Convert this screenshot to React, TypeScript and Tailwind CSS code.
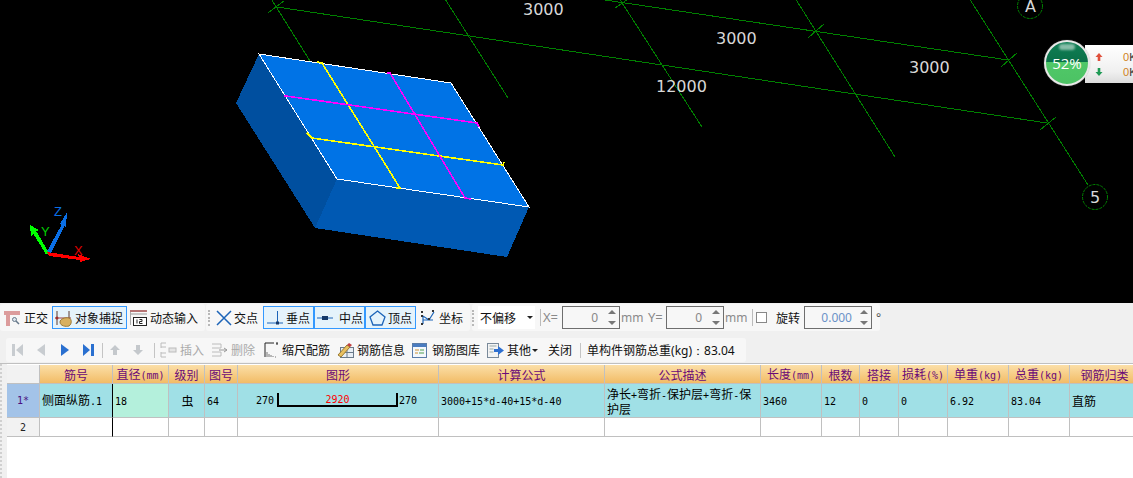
import type { ReactNode } from "react";
import clsx from "clsx";

const cjk = "font-['Noto_Sans_CJK_SC','Noto_Sans',sans-serif]";

// split latin runs off so they get the narrow half-width look of the original grid font
function T({ s }: { s: string }) {
  return (
    <>
      {s.split(/([\x00-\x7f]+)/).map((part, i) =>
        /^[\x00-\x7f]+$/.test(part) ? (
          <span key={i} className="font-['DejaVu_Sans_Mono',monospace] text-[10px]">
            {part}
          </span>
        ) : (
          <span key={i}>{part}</span>
        )
      )}
    </>
  );
}

function Viewport() {
  const greens = [
    [270, -3, 315, 69],
    [445, -1, 508, 98],
    [617, -5, 702, 127],
    [795, -2, 895, 157],
    [969, -2, 1088, 185],
    [277, 7, 1047, 123],
    [605, 0, 1008, 60],
    [268, 13, 284, 1],
    [615, 8, 631, -3],
    [808, 38, 824, 24],
    [1001, 67, 1017, 53],
    [1040, 130, 1056, 117],
  ];
  return (
    <div className="relative h-[303px] shrink-0 bg-black">
      <svg width="1133" height="303" className="block">
        <g stroke="#008000" shapeRendering="crispEdges">
          {greens.map(([a, b, c, d], i) => (
            <line key={i} x1={a} y1={b} x2={c} y2={d} />
          ))}
        </g>
        <g fill="none" stroke="#008000" strokeDasharray="3 1">
          <circle cx="1030" cy="6" r="12.5" />
          <circle cx="1095" cy="197" r="12.5" />
        </g>
        <g fill="#d8d8d8" fontFamily="DejaVu Sans" fontSize="16">
          <text x="523" y="15">3000</text>
          <text x="716" y="44">3000</text>
          <text x="909" y="73">3000</text>
          <text x="656" y="92">12000</text>
          <text x="1025" y="12">A</text>
          <text x="1090" y="203">5</text>
        </g>

        {/* the slab */}
        <g shapeRendering="crispEdges">
          <polygon points="259,54 236,103 315,228 337,179" fill="#004f9f" />
          <polygon points="337,179 315,228 507,257 529,207" fill="#0059b3" />
          <polygon points="259,54 451,83 529,207 337,179" fill="#0073e6" stroke="#fff" />
          <g fill="none" strokeWidth="1.6">
            <polyline points="317,62 322,63 400,188 396,188" stroke="#ffff00" />
            <polyline points="307,133 312,138 503,165 504,162" stroke="#ffff00" />
            <polyline points="387,73 390,73 465,198 471,199" stroke="#ff00ff" />
            <polyline points="284,96 286,96 477,123 479,127" stroke="#ff00ff" />
          </g>
        </g>

        {/* axis triad */}
        <g shapeRendering="crispEdges">
          <polygon points="67,212 66,227 64.500,226 50,254.500 45.500,254 61.500,225 60,224" fill="#0a6fe6" />
          <polygon points="30,225 39,230 36.500,231.500 49.500,254 46,254.500 33.500,234 31,236.500" fill="#00ff00" />
          <polygon points="47,252 79,257 78,254 91,259 80,262 80,260 49,256" fill="#ff0000" />
        </g>
        <g fontFamily="Liberation Sans" fontSize="13">
          <text x="54" y="216" fill="#0a6fe6">Z</text>
          <text x="41" y="236" fill="#00d000">Y</text>
          <text x="74" y="255" fill="#e00000">X</text>
        </g>
      </svg>

      {/* memory gauge floating over the drawing */}
      <div className="absolute left-[1085px] top-[45px] flex h-[38px] w-[48px] flex-col justify-center gap-[3px] overflow-hidden bg-[linear-gradient(#ffffff,#f0f0f0_70%,#dcdcdc)] pl-[10px] font-['Liberation_Sans',sans-serif] text-[11px] leading-[12px]">
        <div className="flex items-center">
          <svg width="8" height="10" viewBox="0 0 8 10" className="shrink-0"><path d="M4 1 7.5 5H5.3v4H2.7V5H.5z" fill="#e0503c" /></svg>
          <span className="ml-[20px] shrink-0 text-[#d08020]">0</span>
          <span className="shrink-0 text-[#333]">K</span>
        </div>
        <div className="flex items-center">
          <svg width="8" height="10" viewBox="0 0 8 10" className="shrink-0"><path d="M4 9 .5 5h2.2V1h2.6v4h2.2z" fill="#1f9a55" /></svg>
          <span className="ml-[20px] shrink-0 text-[#d08020]">0</span>
          <span className="shrink-0 text-[#333]">K</span>
        </div>
      </div>
      <div className="absolute left-[1044px] top-[40px] h-[46px] w-[46px] overflow-hidden rounded-full border-2 border-[#e8e8e8] bg-[linear-gradient(#0f7f55,#0a7048_48%,#50c868_48%,#4cc264)] shadow-[0_0_1px_#999]">
        <div className="absolute left-[13px] top-[2px] h-[6px] w-[16px] rounded-full bg-white/50 blur-[1px]" />
        <div className="absolute inset-0 flex items-center justify-center font-['Open_Sans',sans-serif] text-[15px] leading-none text-white">52%</div>
      </div>
    </div>
  );
}

/* ---------- toolbar icons ---------- */
const Ortho = () => (
  <svg width="16" height="16" viewBox="0 0 16 16">
    <path d="M0 1h16v4H6v11H2V5H0z" fill="#dc9c9c" />
    <circle cx="10.5" cy="9.500" r="2" fill="#dfe6ee" stroke="#66788a" />
    <path d="m12 11 3 3" stroke="#66788a" strokeWidth="1.5" />
  </svg>
);
const Snap = () => (
  <svg width="17" height="18" viewBox="0 0 17 18">
    <path d="M2 2v14M14 2v14" stroke="#5a3a30" />
    <path d="M0 9h16" stroke="#a04040" />
    <path d="M5 13c0-3 5-5 9-4 3 1 3 6 0 8-3 1-9 0-9-4z" fill="#d8b060" stroke="#9a7a38" />
    <circle cx="2" cy="9" r="1.500" fill="#a03030" />
  </svg>
);
const DynInput = () => (
  <svg width="17" height="16" viewBox="0 0 17 16">
    <path d="M0 1h17" stroke="#a04848" strokeWidth="1.5" />
    <path d="M0 4h17" stroke="#999" />
    <path d="M.5 2v13" stroke="#aaa" />
    <rect x="3.500" y="7.500" width="13" height="8" fill="#fff" stroke="#222" />
    <path d="M7 9.500v4M9.500 9.500H12v2H9.500v2H12.500" stroke="#222" fill="none" />
  </svg>
);
const Cross = () => (
  <svg width="16" height="16" viewBox="0 0 16 16">
    <path d="m1 1 14 14M15 1 1 15" stroke="#1c64b8" strokeWidth="1.500" />
  </svg>
);
const Perp = () => (
  <svg width="16" height="16" viewBox="0 0 16 16">
    <path d="M10.500 1v12M0 13h16" stroke="#1c64b8" />
    <rect x="9" y="11.500" width="3" height="3" fill="#163a6a" />
  </svg>
);
const Mid = () => (
  <svg width="16" height="8" viewBox="0 0 16 8">
    <path d="M0 4h16" stroke="#1c64b8" />
    <rect x="5" y="2" width="6" height="4" fill="#163a6a" />
  </svg>
);
const Vertex = () => (
  <svg width="17" height="16" viewBox="0 0 17 16">
    <path d="m8.500 1 7.500 6-3 8H4L1 7z" fill="none" stroke="#1c64b8" strokeWidth="1.300" />
  </svg>
);
const Coord = () => (
  <svg width="17" height="17" viewBox="0 0 17 17" fill="none" stroke="#1c64b8">
    <path d="M4 15V7l6 4 5-8M4 11h10" strokeWidth="1.200" />
    <g fill="#333" stroke="none">
      <rect x="2" y="2" width="2" height="2" />
      <rect x="2" y="6" width="2" height="2" />
      <rect x="2" y="14" width="2" height="2" />
      <rect x="13" y="1" width="2" height="2" />
      <rect x="9" y="9" width="2" height="2" />
    </g>
  </svg>
);
const Grip = () => (
  <div className="flex h-[16px] w-[2px] shrink-0 flex-col justify-between">
    {[0, 1, 2, 3, 4].map((i) => (
      <div key={i} className="h-[2px] w-[2px] bg-[#b8b8b8]" />
    ))}
  </div>
);
const Spin = () => (
  <div className="flex flex-col gap-[7px]">
    <div className="h-0 w-0 border-x-[4px] border-b-[4px] border-x-transparent border-b-[#777]" />
    <div className="h-0 w-0 border-x-[4px] border-t-[4px] border-x-transparent border-t-[#777]" />
  </div>
);

function Tool({ icon, label, className, on }: { icon?: ReactNode; label: string; className?: string; on?: boolean }) {
  return (
    <div
      className={clsx(
        "flex h-[23px] shrink-0 items-center",
        on && "border border-[#3399ff] bg-[#e5f3fb]",
        className
      )}
    >
      {icon}
      <span className="whitespace-nowrap">{label}</span>
    </div>
  );
}

function Num({ value, className, text }: { value: string; className: string; text: string }) {
  return (
    <div className={clsx("flex h-[23px] shrink-0 items-center justify-end border border-[#6e6e6e] pr-[3px]", className)}>
      <span className={clsx("font-['Noto_Sans',sans-serif] text-[12px]", text)}>{value}</span>
      <Spin />
    </div>
  );
}

function SnapBar() {
  return (
    <div className="flex h-[32px] shrink-0 items-start bg-[#f0f0f0] pt-px text-[12px] text-[#111]">
      <div className="flex h-[27px] w-[205px] shrink-0 items-center rounded-[3px] bg-[#f7f7f7] pl-[4px]">
        <Tool icon={<Ortho />} label="正交" className="w-[44px] gap-[4px]" />
        <Tool on icon={<Snap />} label="对象捕捉" className="ml-[4px] w-[75px] gap-[3px] pl-[2px]" />
        <Tool icon={<DynInput />} label="动态输入" className="ml-[3px] w-[68px] gap-[3px]" />
      </div>
      <div className="ml-[1px] flex h-[27px] w-[264px] shrink-0 items-center rounded-[3px] bg-[#f7f7f7] pl-[2px]">
        <Grip />
        <Tool icon={<Cross />} label="交点" className="ml-[6px] w-[43px] gap-[2px]" />
        <Tool on icon={<Perp />} label="垂点" className="ml-[4px] w-[51px] gap-[3px] pl-[3px]" />
        <Tool on icon={<Mid />} label="中点" className="w-[51px] gap-[6px] pl-[2px]" />
        <Tool on icon={<Vertex />} label="顶点" className="w-[51px] gap-[2px] pl-[3px]" />
        <Tool icon={<Coord />} label="坐标" className="ml-[3px] w-[44px] gap-[3px]" />
      </div>
      <div className="ml-[2px] flex h-[27px] w-[408px] shrink-0 items-center rounded-[3px] bg-[#f7f7f7] text-[#8a8a8a]">
        <Grip />
        <div className="ml-[4px] flex h-[23px] w-[57px] shrink-0 items-center bg-white pl-[2px] text-[#111]">
          <span className="whitespace-nowrap">不偏移</span>
          <div className="ml-[11px] h-0 w-0 border-x-[3px] border-t-[3px] border-x-transparent border-t-[#222]" />
        </div>
        <div className="ml-[5px] h-[17px] w-px shrink-0 bg-[#bbb]" />
        <span className="ml-[2px] w-[19px] shrink-0 font-['Noto_Sans',sans-serif] text-[13px]">X=</span>
        <Num value="0" text="mr-[10px] text-[#888]" className="w-[58px]" />
        <span className="ml-[1px] w-[27px] shrink-0 font-['Noto_Sans',sans-serif]">mm</span>
        <span className="w-[18px] shrink-0 font-['Noto_Sans',sans-serif] text-[13px]">Y=</span>
        <Num value="0" text="mr-[10px] text-[#888]" className="w-[58px]" />
        <span className="ml-[1px] w-[27px] shrink-0 font-['Noto_Sans',sans-serif]">mm</span>
        <div className="h-[17px] w-px shrink-0 bg-[#bbb]" />
        <div className="ml-[3px] h-[11px] w-[11px] shrink-0 border border-[#888] bg-white" />
        <span className="ml-[9px] w-[28px] shrink-0 text-[#111]">旋转</span>
        <Num value="0.000" text="mr-[8px] text-[#6a92c8]" className="w-[68px]" />
        <span className="ml-[4px] font-['Noto_Sans',sans-serif] text-[#555]">°</span>
      </div>
    </div>
  );
}

/* ---------- grid toolbar ---------- */
const NavFirst = ({ c }: { c: string }) => (
  <svg width="11" height="12" viewBox="0 0 11 12"><path d="M0 0h3v12H0zM11 0v12L4 6z" fill={c} /></svg>
);
const NavPrev = ({ c }: { c: string }) => (
  <svg width="9" height="12" viewBox="0 0 9 12"><path d="M8 0v12L0 6z" fill={c} /></svg>
);
const NavNext = ({ c }: { c: string }) => (
  <svg width="9" height="12" viewBox="0 0 9 12"><path d="M1 0v12l8-6z" fill={c} /></svg>
);
const NavLast = ({ c }: { c: string }) => (
  <svg width="11" height="12" viewBox="0 0 11 12"><path d="M8 0h3v12H8zM0 0v12l7-6z" fill={c} /></svg>
);
const Up = () => (
  <svg width="10" height="10" viewBox="0 0 10 10"><path d="M5 0 10 5H7v5H3V5H0z" fill="#c4c8cc" /></svg>
);
const Down = () => (
  <svg width="10" height="10" viewBox="0 0 10 10"><path d="M5 10 0 5h3V0h4v5h3z" fill="#c4c8cc" /></svg>
);
const Sep = ({ className }: { className: string }) => <div className={clsx("h-[15px] w-px shrink-0 bg-[#c4c4c4]", className)} />;
const InsertIcon = () => (
  <svg width="17" height="16" viewBox="0 0 17 16" fill="none" stroke="#bcbcbc">
    <path d="M6 1H1v4h5M6 11H1v4h5M1 5v1M1 10v1" />
    <path d="M9 8h7" stroke="#aaa" />
    <rect x="9" y="6" width="7" height="4" fill="#e4e4e4" />
  </svg>
);
const DeleteIcon = () => (
  <svg width="17" height="16" viewBox="0 0 17 16" fill="none" stroke="#bcbcbc">
    <path d="M1 2h9v4H1M1 10h9v4H1" />
    <path d="M8 8h8" stroke="#999" />
    <path d="m13 6 3 2-3 2" stroke="#999" />
  </svg>
);
const ScaleIcon = () => (
  <svg width="14" height="16" viewBox="0 0 14 16" fill="none" stroke="#222">
    <path d="M1 1v14" />
    <path d="M1 1h9M12 1h2M13 1v2" />
    <path d="M3 15v-5M5 15v-3M7 15v-2M9 15v-1M11 15h1" stroke="#777" />
  </svg>
);
const InfoIcon = () => (
  <svg width="17" height="16" viewBox="0 0 17 16">
    <rect x="3.500" y="5.500" width="13" height="10" fill="#e8eef4" stroke="#6a7a8a" />
    <path d="M3.500 10.500h13M10 5.500v10" stroke="#6a7a8a" />
    <path d="m1 13 9-10 3 2-9 10z" fill="#e8c060" stroke="#9a7a30" />
    <path d="m10 3 2-2 3 2-2 2z" fill="#c04040" />
  </svg>
);
const LibIcon = () => (
  <svg width="15" height="15" viewBox="0 0 15 15">
    <rect x=".5" y=".5" width="14" height="14" fill="#f4f8fc" stroke="#5a7ca8" />
    <rect x="1" y="1" width="13" height="3" fill="#4a7cc0" />
    <path d="M3 7h4M3 10h3" stroke="#d09030" />
    <path d="M8 7h4M7 10h5" stroke="#50a050" />
  </svg>
);
const OtherIcon = () => (
  <svg width="17" height="15" viewBox="0 0 17 15">
    <rect x=".5" y=".5" width="11" height="14" fill="#f4f4f4" stroke="#7a8a9a" />
    <path d="M2.500 3h7M2.500 6h4M2.500 9h4" stroke="#9aa" />
    <path d="M7 6h4V3l6 4.500-6 4.500V9H7z" fill="#2f70d0" />
  </svg>
);

function GridBar() {
  return (
    <div className="flex h-[28px] shrink-0 items-end bg-[#f0f0f0] pb-px pl-[6px] text-[12px]">
      <div className="flex h-[24px] w-[740px] shrink-0 items-center rounded-[3px] bg-[#f7f7f7] text-[#111]">
        <div className="ml-[6px] flex w-[25px] shrink-0"><NavFirst c="#c8ccd0" /></div>
        <div className="flex w-[23px] shrink-0"><NavPrev c="#c8ccd0" /></div>
        <div className="flex w-[23px] shrink-0"><NavNext c="#2a70d0" /></div>
        <NavLast c="#2a70d0" />
        <Sep className="ml-[8px]" />
        <div className="ml-[7px] flex w-[23px] shrink-0"><Up /></div>
        <Down />
        <Sep className="ml-[11px]" />
        <Tool icon={<InsertIcon />} label="插入" className="ml-[5px] w-[51px] gap-[3px] text-[#aaa]" />
        <Tool icon={<DeleteIcon />} label="删除" className="w-[53px] gap-[3px] text-[#aaa]" />
        <Tool icon={<ScaleIcon />} label="缩尺配筋" className="w-[73px] gap-[4px]" />
        <Tool icon={<InfoIcon />} label="钢筋信息" className="w-[75px] gap-[3px]" />
        <Tool icon={<LibIcon />} label="钢筋图库" className="w-[75px] gap-[5px]" />
        <Tool icon={<OtherIcon />} label="其他" className="w-[44px] gap-[3px]" />
        <div className="ml-[1px] h-0 w-0 shrink-0 border-x-[3px] border-t-[3px] border-x-transparent border-t-[#222]" />
        <span className="ml-[10px] shrink-0">关闭</span>
        <Sep className="ml-[8px]" />
        <span className="ml-[6px] whitespace-nowrap">
          单构件钢筋总重<span className="font-['Noto_Sans',sans-serif]">(kg)：83.04</span>
        </span>
      </div>
    </div>
  );
}

/* ---------- rebar table ---------- */
const headers = ["筋号", "直径(mm)", "级别", "图号", "图形", "计算公式", "公式描述", "长度(mm)", "根数", "搭接", "损耗(%)", "单重(kg)", "总重(kg)", "钢筋归类"];
const cellLine = "border-r border-b border-[#c0c0c0]";

function Cell({ s, className }: { s?: string; className?: string }) {
  return (
    <div className={clsx("flex items-center overflow-hidden pl-[2px] text-black", cellLine, className)}>
      {s ? <span><T s={s} /></span> : null}
    </div>
  );
}

function RebarTable() {
  return (
    <div className={clsx("flex min-h-0 flex-1 border-t border-[#c0c0c0] bg-white text-[12px]", cjk)}>
      <div className="w-[7px] shrink-0 border-l-2 border-dotted border-[#d0d0d0] bg-[#f0f0f0]" />
      <div className="grid h-fit shrink-0 grid-cols-[33px_73px_56px_36px_33px_201px_166px_156px_61px_38px_39px_49px_61px_61px_70px] grid-rows-[19px_34px_19px] pt-px leading-[13px]">
        <div className={clsx("bg-[#f2f2f2]", cellLine)} />
        {headers.map((h) => (
          <div
            key={h}
            className={clsx(
              "flex items-center justify-center whitespace-nowrap bg-[linear-gradient(#fbdfa8,#f2bc66)] text-[#6a0a78]",
              cellLine
            )}
          >
            <span><T s={h} /></span>
          </div>
        ))}

        <div className={clsx("flex items-center justify-center bg-[#a3c3e8] text-[#4a1080]", cellLine)}>
          <T s="1*" />
        </div>
        <Cell s="侧面纵筋.1" className="border-r-black bg-[#a0e0e6]" />
        <Cell s="18" className="bg-[#b4f0dc]" />
        <Cell s="虫" className="justify-center bg-[#a0e0e6] pl-0" />
        <Cell s="64" className="bg-[#a0e0e6]" />
        <div className={clsx("flex items-center bg-[#a0e0e6] pl-[18px] font-['DejaVu_Sans_Mono',monospace] text-[10px] text-black", cellLine)}>
          <span>270</span>
          <div className="mb-[1px] ml-[3px] flex h-[14px] w-[121px] justify-center border-x-2 border-b-2 border-black text-[#ff0000]">
            <span className="mt-[1px] leading-[12px]">2920</span>
          </div>
          <span className="ml-[1px]">270</span>
        </div>
        <Cell s="3000+15*d-40+15*d-40" className="bg-[#a0e0e6]" />
        <Cell s="净长+弯折-保护层+弯折-保护层" className="bg-[#a0e0e6]" />
        <Cell s="3460" className="bg-[#a0e0e6]" />
        <Cell s="12" className="bg-[#a0e0e6]" />
        <Cell s="0" className="bg-[#a0e0e6]" />
        <Cell s="0" className="bg-[#a0e0e6]" />
        <Cell s="6.92" className="bg-[#a0e0e6]" />
        <Cell s="83.04" className="bg-[#a0e0e6]" />
        <Cell s="直筋" className="bg-[#a0e0e6]" />

        <div className={clsx("flex items-center justify-center bg-[#f2f2f2] text-[#222]", cellLine)}>
          <T s="2" />
        </div>
        <Cell className="border-r-black" />
        {Array.from({ length: 13 }).map((_, i) => (
          <Cell key={i} />
        ))}
      </div>
    </div>
  );
}

export default function App() {
  return (
    <div className={clsx("flex h-[478px] w-[1133px] flex-col overflow-hidden", cjk)}>
      <Viewport />
      <SnapBar />
      <GridBar />
      <RebarTable />
    </div>
  );
}
